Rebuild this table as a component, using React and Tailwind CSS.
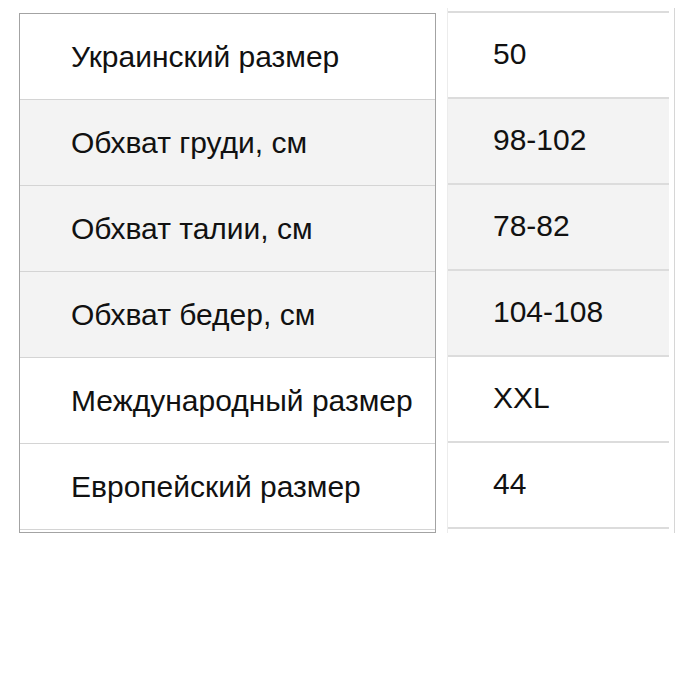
export default function App() {
  const rows = [
    ["Украинский размер", "50", false],
    ["Обхват груди, см", "98-102", true],
    ["Обхват талии, см", "78-82", true],
    ["Обхват бедер, см", "104-108", true],
    ["Международный размер", "XXL", false],
    ["Европейский размер", "44", false],
  ];

  return (
    <div className="w-[700px] h-[700px] bg-white font-['Liberation_Sans',Arial,sans-serif] text-[#111] text-[30px] relative">
      <div className="flex items-start pt-[8px]">
        {/* left column: names */}
        <div className="ml-[19px] mt-[5px] w-[417px] border border-[#a3a3a3]">
          {rows.map(([name, , grey], i) => (
            <div
              key={i}
              className={`h-[86px] flex items-center pl-[51px] border-b border-[#d4d4d4] ${grey ? "bg-[#f3f3f3]" : "bg-white"}`}
            >
              {name}
            </div>
          ))}
          <div className="h-[2px]" />
        </div>

        {/* right column: values */}
        <div className="ml-[11px] flex">
          <div className="w-[222px] border-l border-[#ececec]">
            <div className="mt-[3px] h-[2px] bg-[#dcdcdc]" />
            {rows.map(([, val, grey], i) => (
              <div
                key={i}
                className={`h-[86px] flex items-center pl-[45px] pb-[3px] border-b-2 border-[#dcdcdc] ${grey ? "bg-[#f3f3f3]" : "bg-white"}`}
              >
                {val}
              </div>
            ))}
          </div>
          <div className="ml-[5px] w-px h-[525px] bg-[#d6d6d6]" />
        </div>
      </div>
    </div>
  );
}
